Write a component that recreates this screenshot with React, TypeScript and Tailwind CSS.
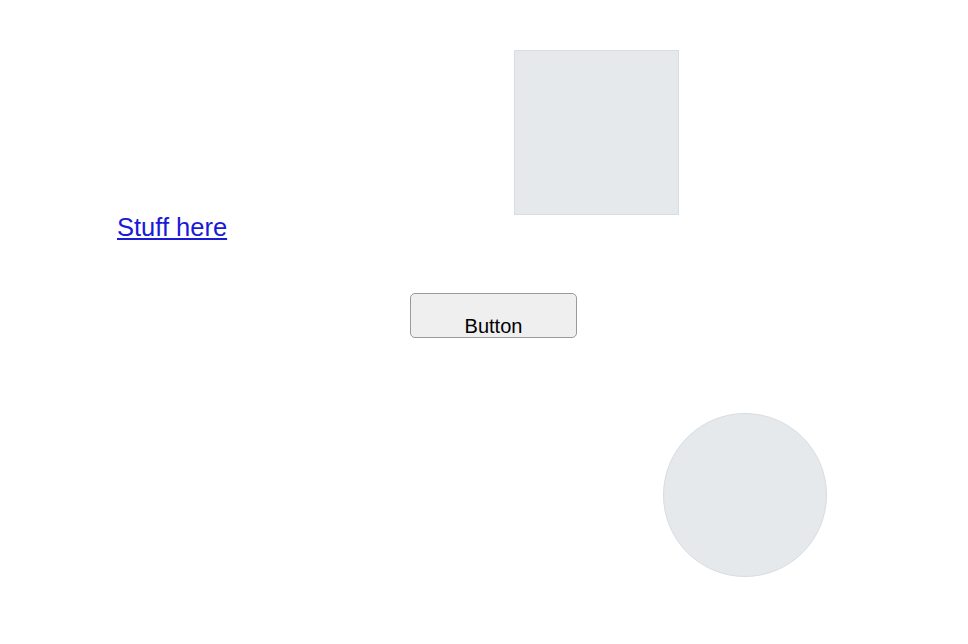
export default function App() {
  return (
    <div className="min-h-screen w-full bg-white" style={{ fontFamily: '"Liberation Sans", Arial, sans-serif' }}>
      <div className="flex flex-col items-start">
        <div className="ml-[514px] mt-[50px] h-[165px] w-[165px] border border-[#d8dde1] bg-[#e5e9ec]" />

        <a href="#" className="ml-[117px] mt-0 text-[25.5px] leading-none text-[#1a1ad8] underline underline-offset-[2px]">
          Stuff here
        </a>

        <button
          type="button"
          className="ml-[410px] mt-[52px] flex h-[45px] w-[167px] items-end justify-center rounded-[5px] border border-[#9a9a9a] bg-[#efefef] pb-[1px] text-[20px] leading-[20px] text-black"
        >
          Button
        </button>

        <div className="ml-[663px] mt-[75px] h-[164px] w-[164px] rounded-full border border-[#d8dde1] bg-[#e5e9ec]" />
      </div>
    </div>
  );
}
